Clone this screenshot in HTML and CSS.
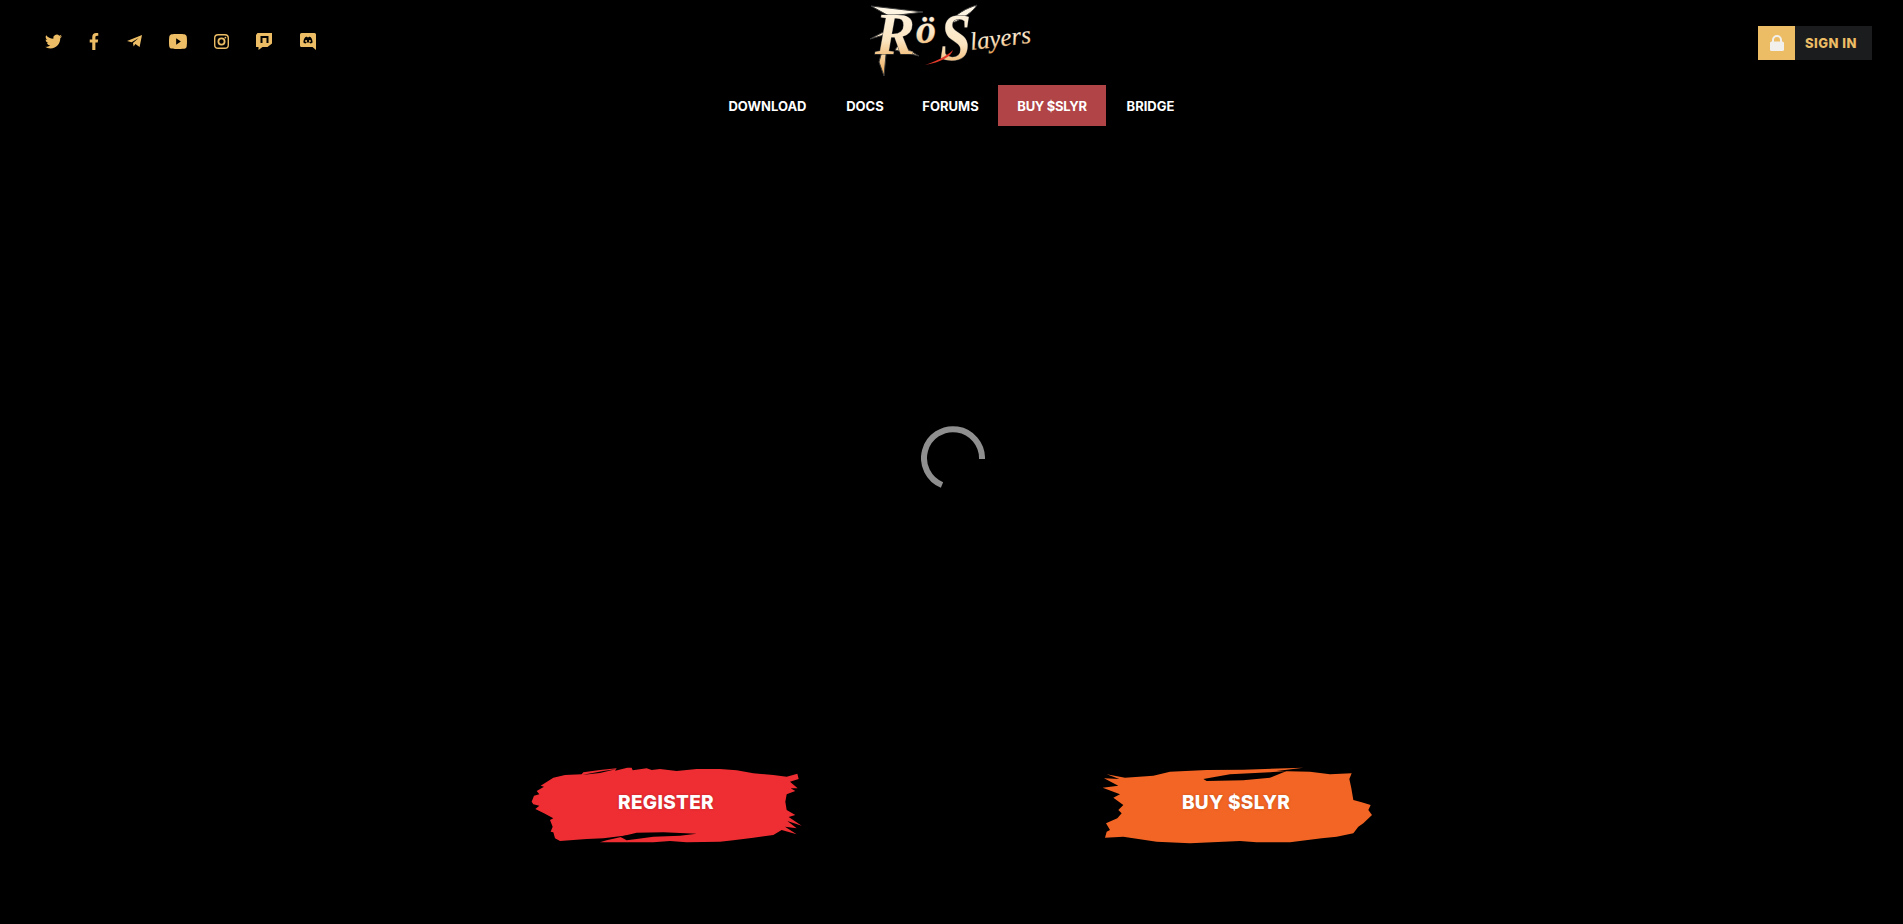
FILE: index.html
```html
<!DOCTYPE html>
<html lang="en">
<head>
    <meta charset="UTF-8">
    <meta name="viewport" content="width=device-width,initial-scale=1"/>
    <title>RöSlayers</title>
    <link rel="stylesheet" href="styles.css">
</head>
<body>
    <header class="top">
        <div class="social">
            <a href="#" class="ico ico-tw"><svg viewBox="0 0 24 24"><path d="M23.953 4.57a10 10 0 01-2.825.775 4.958 4.958 0 002.163-2.723c-.951.555-2.005.959-3.127 1.184a4.92 4.92 0 00-8.384 4.482C7.69 8.095 4.067 6.13 1.64 3.162a4.822 4.822 0 00-.666 2.475c0 1.71.87 3.213 2.188 4.096a4.904 4.904 0 01-2.228-.616v.06a4.923 4.923 0 003.946 4.827 4.996 4.996 0 01-2.212.085 4.936 4.936 0 004.604 3.417 9.867 9.867 0 01-6.102 2.105c-.39 0-.779-.023-1.17-.067a13.995 13.995 0 007.557 2.209c9.053 0 13.998-7.496 13.998-13.985 0-.21 0-.42-.015-.63A9.935 9.935 0 0024 4.59z"/></svg></a>
            <a href="#" class="ico ico-fb"><svg viewBox="0 0 320 512" preserveAspectRatio="none"><path d="M279.14 288l14.22-92.66h-88.91v-60.13c0-25.35 12.42-50.06 52.24-50.06h40.42V6.26S260.43 0 225.36 0c-73.22 0-121.08 44.38-121.08 124.72v70.62H22.89V288h81.39v224h100.17V288z"/></svg></a>
            <a href="#" class="ico ico-tg"><svg viewBox="0 0 15 13"><path d="M15 0L12.6 12 8.4 9 6.6 11.4 6 8 11.6 3 4.6 7.2 0 6Z"/></svg></a>
            <a href="#" class="ico ico-yt"><svg viewBox="0 2.5 24 19" preserveAspectRatio="none"><path d="M23.498 6.186a3.016 3.016 0 0 0-2.122-2.136C19.505 3.545 12 3.545 12 3.545s-7.505 0-9.377.505A3.017 3.017 0 0 0 .502 6.186C0 8.07 0 12 0 12s0 3.93.502 5.814a3.016 3.016 0 0 0 2.122 2.136c1.871.505 9.376.505 9.376.505s7.505 0 9.377-.505a3.015 3.015 0 0 0 2.122-2.136C24 15.93 24 12 24 12s0-3.93-.502-5.814zM9.545 15.568V8.432L15.818 12l-6.273 3.568z"/></svg></a>
            <a href="#" class="ico ico-ig"><svg viewBox="0 0 15 15"><rect x=".7" y=".7" width="13.6" height="13.6" rx="3.4" class="line"/><circle cx="7.5" cy="7.5" r="3.1" class="line line-2"/><circle cx="11.4" cy="3.6" r=".9"/></svg></a>
            <a href="#" class="ico ico-tc"><svg viewBox="0 0 16 17"><path fill-rule="evenodd" d="M1.5 0H16V10.5L11.5 14H6.5L2.5 17V14H0V2ZM4.5 3H12.5V10H10.5V5H6.5V10H4.5Z"/></svg></a>
            <a href="#" class="ico ico-dc"><svg viewBox="0 0 16 17"><path fill-rule="evenodd" d="M1.5 0H14.5A1.5 1.5 0 0 1 16 1.5V17L12.5 14H1.5A1.5 1.5 0 0 1 0 12.5V1.5A1.5 1.5 0 0 1 1.5 0ZM5.2 4.2C4.2 5.2 3.4 7.4 3.4 9.6 4.2 10.2 5 10.4 5.7 10.5L6.2 9.6H9.8L10.3 10.5C11 10.4 11.8 10.2 12.6 9.6 12.6 7.4 11.8 5.2 10.8 4.2 10 3.9 9.4 3.8 9 3.8L8.8 4.3H7.2L7 3.8C6.6 3.8 6 3.9 5.2 4.2ZM6.1 7A1 1 0 1 1 6.1 9 1 1 0 1 1 6.1 7ZM9.9 7A1 1 0 1 1 9.9 9 1 1 0 1 1 9.9 7Z"/></svg></a>
        </div>
        <a href="#" class="logo">
            <svg viewBox="0 0 170 78" width="170" height="78">
                <defs>
                    <linearGradient id="cream" x1="0" y1="0" x2="0" y2="1">
                        <stop offset="0" stop-color="#fff8ea"/>
                        <stop offset=".6" stop-color="#fbe4c0"/>
                        <stop offset="1" stop-color="#eda550"/>
                    </linearGradient>
                </defs>
                <path class="streak" d="M4 6L56 12 32 15 22 16ZM20 44L17 76 12 62 17 44ZM3 39L22 29 24 33ZM32 44L52 56 28 50ZM84 22C88 14 100 8 110 5 106 12 96 18 88 22Z"/>
                <text class="mark" x="8" y="54" font-size="60">R</text>
                <text class="mark" x="49" y="43" font-size="40">ö</text>
                <text class="mark" transform="translate(73 60) scale(.82 1)" font-size="68">S</text>
                <text class="mark mark-l" transform="translate(104 50) rotate(-7)" font-size="25">layers</text>
                <path class="slash" d="M58 65C70 61 80 56 86 50 84 57 74 62 58 65Z"/>
            </svg>
        </a>
        <a href="#" class="signin">
            <span class="lock"><svg viewBox="0 0 14 16" width="14" height="16"><path d="M3 7V5a4 4 0 0 1 8 0v2" class="shackle"/><rect y="6.5" width="14" height="9.5" rx="1.5"/></svg></span>
            <span class="signin-txt">SIGN IN</span>
        </a>
    </header>

    <nav class="menu">
        <a href="#">DOWNLOAD</a>
        <a href="#">DOCS</a>
        <a href="#">FORUMS</a>
        <a href="#" class="active">BUY $SLYR</a>
        <a href="#">BRIDGE</a>
    </nav>

    <main class="load">
        <svg viewBox="0 0 64 64" width="64" height="64"><path d="M61 33A29 29 0 1 0 21 59"/></svg>
    </main>

    <section class="btns">
        <a href="#" class="brush">
            <svg viewBox="0 0 870 285"><path class="red" d="M35 140L42 122 58 118 50 108 72 95 62 92 100 68 135 60 185 58 190 52 240 45 290 40 285 47 322 38 335 38 338 46 380 40 395 45 420 42 470 48 530 42 600 42 650 46 700 55 760 60 800 65 832 56 836 72 810 80 833 100 812 100 826 108 800 118 796 140 800 165 826 180 806 186 845 212 802 198 830 220 795 215 830 238 785 225 760 240 700 248 640 256 600 260 500 262 450 258 400 262 320 262 240 262 260 256 330 240 250 250 200 252 150 256 120 258 105 250 100 232 92 230 98 215 90 195 100 190 72 175 46 162 58 152 40 148Z"/><path d="M300 245L350 233 430 232 530 236 480 242 400 245 350 252 320 256ZM185 60L250 48 290 42 240 54Z"/></svg>
            <span>REGISTER</span>
        </a>
        <a href="#" class="brush">
            <svg viewBox="0 0 870 285"><path class="orange" d="M50 58L105 68 190 62 240 50 350 45 460 44 640 38 560 48 660 50 720 58 785 55 778 72 784 100 790 135 815 142 842 150 835 165 846 180 820 205 805 215 790 235 740 245 695 250 600 262 500 262 450 258 300 265 200 260 100 245 45 248 50 230 60 225 48 205 82 190 95 175 85 165 100 150 70 128 90 118 38 98 85 92 42 70 88 72Z"/><path d="M340 72L420 58 540 52 590 48 540 68 460 76 350 78Z"/></svg>
            <span>BUY $SLYR</span>
        </a>
    </section>
</body>
</html>
```

FILE: styles.css
```css
*{
    margin: 0;
    padding: 0;
    box-sizing: border-box;
}
html,body{
    height: 100%;
}
body{
    background: #000;
    color: #fff;
    font-family: "Inter", "Liberation Sans", sans-serif;
    display: flex;
    flex-direction: column;
    overflow: hidden;
}
a{
    color: inherit;
    text-decoration: none;
}
.top{
    height: 85px;
    flex: none;
    display: grid;
    grid-template-columns: 1fr 170px 1fr;
    align-items: start;
}
.social{
    display: flex;
    gap: 27.3px;
    align-items: center;
    padding: 33px 0 0 45px;
}
.ico{
    display: block;
    height: 17px;
}
.ico svg{
    display: block;
    width: 100%;
    height: 100%;
    fill: #ecbd65;
}
.ico-tw{ width: 17px; }
.ico-fb{ width: 10px; }
.ico-tg{ width: 15px; }
.ico-yt{ width: 18px; }
.ico-ig{ width: 15px; }
.ico-tc{ width: 16px; }
.ico-dc{ width: 16px; }
.ico svg .line{
    fill: none;
    stroke: #ecbd65;
    stroke-width: 1.4;
}
.ico svg .line-2{
    stroke-width: 1.8;
}
.logo{
    display: block;
    height: 78px;
}
.logo svg{
    display: block;
}
.streak{
    fill: url(#cream);
    stroke: #3a3a3a;
    stroke-width: 1;
}
.slash{
    fill: #e2392b;
}
.mark{
    font-family: "Liberation Serif", serif;
    font-style: italic;
    font-weight: bold;
    fill: url(#cream);
    stroke: #444;
    stroke-width: 1;
    paint-order: stroke;
}
.mark-l{
    font-weight: normal;
    stroke-width: .6;
}
.signin{
    justify-self: end;
    margin: 26px 31px 0 0;
    height: 34px;
    width: 114px;
    background: #1b1c1e;
    display: flex;
    align-items: center;
    font-size: 13px;
    font-weight: 800;
    letter-spacing: .5px;
    color: #ecbd65;
}
.lock{
    width: 37px;
    height: 100%;
    background: #ecbd65;
    display: flex;
    align-items: center;
    justify-content: center;
    margin-right: 10px;
}
.lock svg{
    fill: #f2f0ec;
}
.lock .shackle{
    fill: none;
    stroke: #f2f0ec;
    stroke-width: 2;
}
.menu{
    flex: none;
    height: 41px;
    display: grid;
    grid-template-columns: 119px 76px 95px 108px 89px;
    justify-content: center;
    font-size: 13px;
    font-weight: 700;
}
.menu a{
    display: flex;
    align-items: center;
    justify-content: center;
}
.menu a.active{
    background: #b04446;
    letter-spacing: -.3px;
}
.load{
    flex: none;
    display: flex;
    justify-content: center;
    padding: 300px 0 0 2px;
}
.load svg path{
    fill: none;
    stroke: #8f8f8f;
    stroke-width: 6;
}
.btns{
    flex: none;
    margin-top: 265px;
    display: flex;
    justify-content: center;
    gap: 280px;
    padding-right: 3px;
}
.brush{
    width: 290px;
    height: 95px;
    display: grid;
    place-items: center;
    font-size: 19px;
    font-weight: 800;
    letter-spacing: .3px;
}
.brush svg,.brush span{
    grid-area: 1 / 1;
}
.brush svg{
    width: 100%;
    height: 100%;
    fill: #000;
}
.brush span{
    z-index: 1;
    padding-left: 2px;
    text-shadow: 0 0 3px rgba(0,0,0,.2);
}
.red{
    fill: #ee2e33;
}
.orange{
    fill: #f36524;
}
```
